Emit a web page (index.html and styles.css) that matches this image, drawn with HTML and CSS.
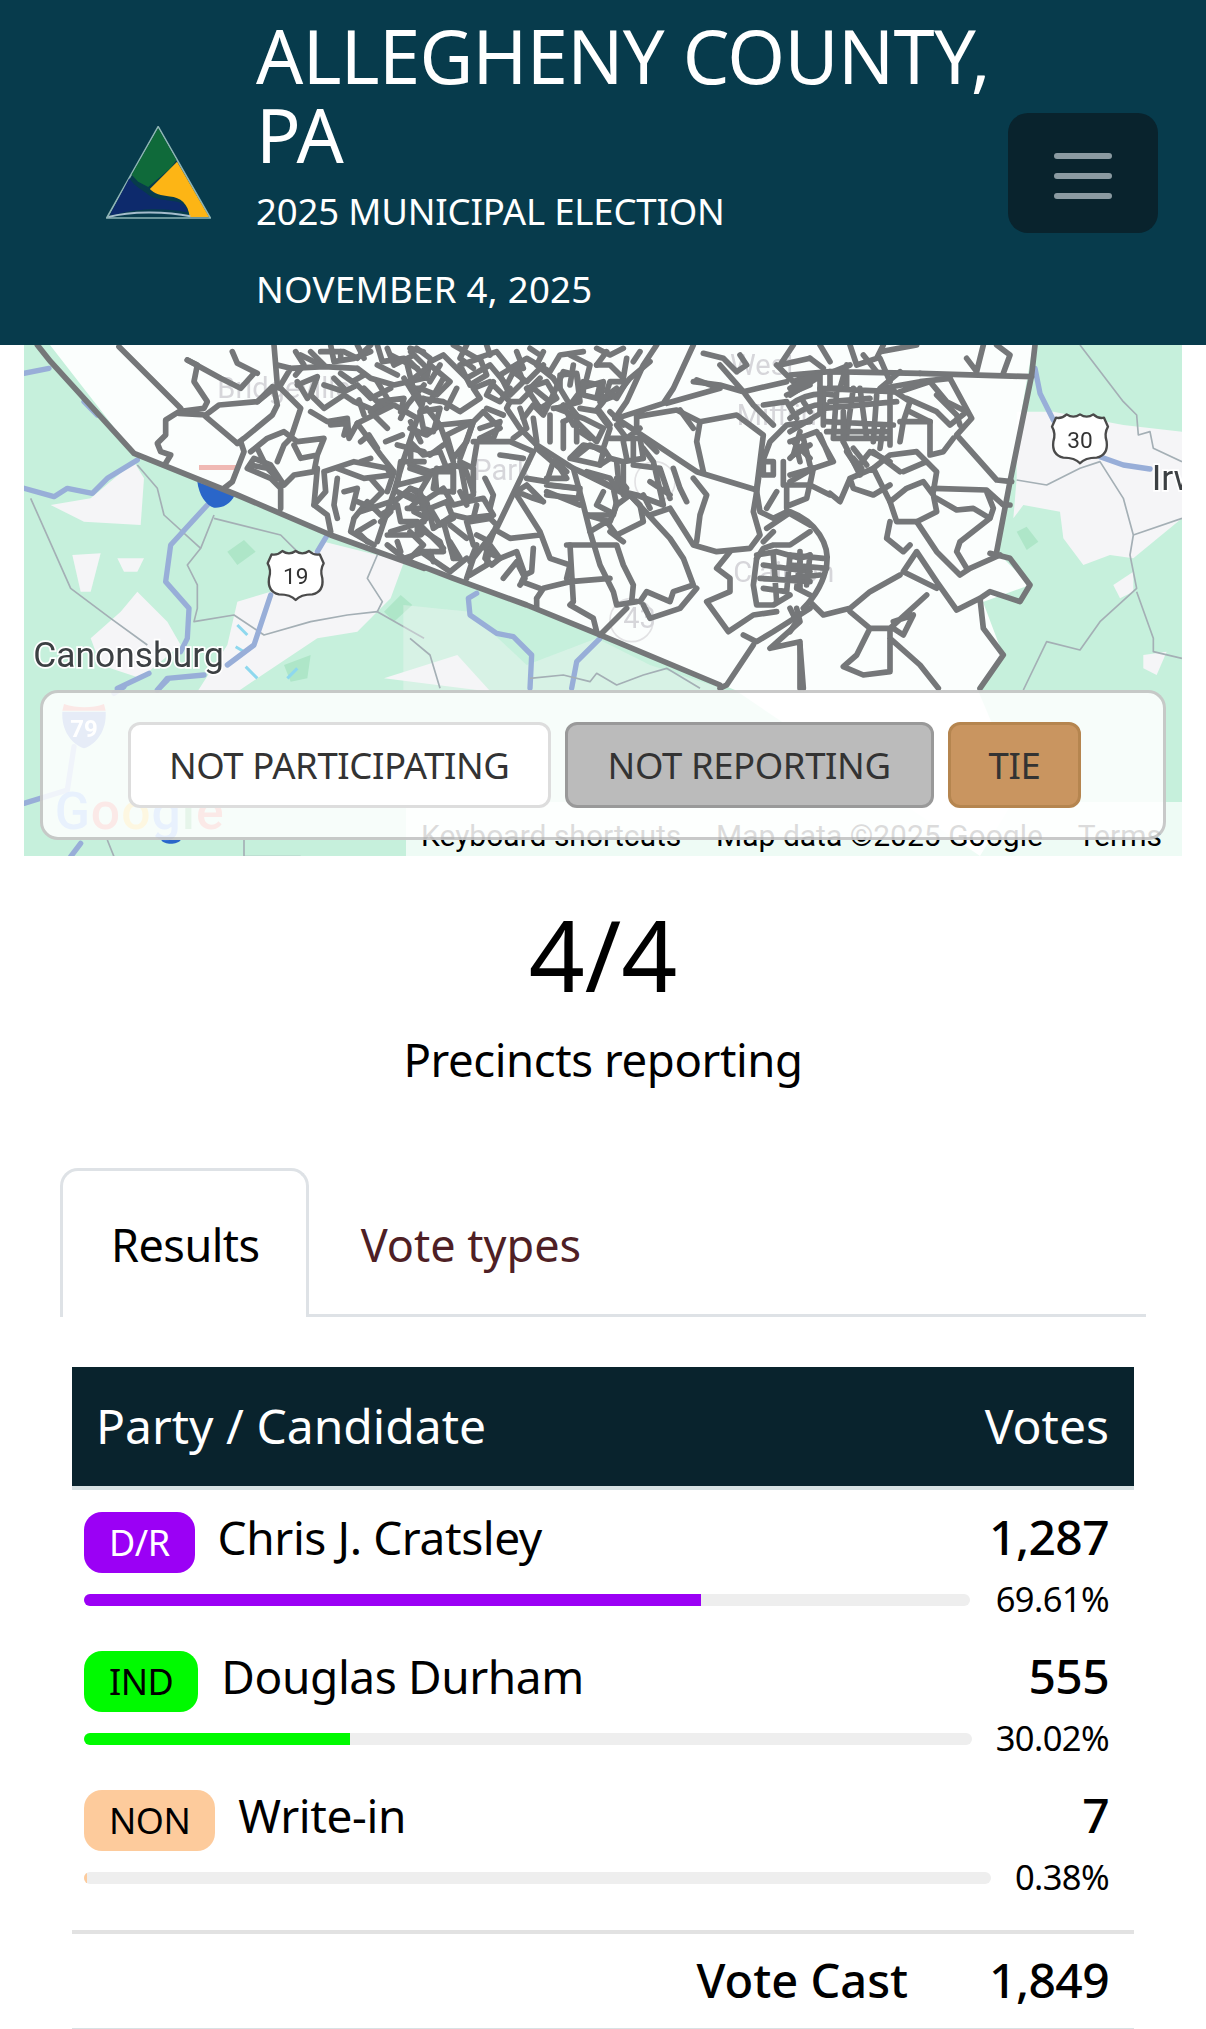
FILE: index.html
```html
<!DOCTYPE html>
<html lang="en">
<head>
<meta charset="utf-8">
<title>Allegheny County, PA - 2025 Municipal Election</title>
<link rel="stylesheet" href="styles.css">
</head>
<body>
<header class="site-header">
  <svg class="logo" viewBox="78 78 316 280" aria-hidden="true">
    <path class="logo-edge" d="M235 80L392 355H330L80 355Z"/>
    <path class="logo-green" d="M235 85L290 180L272 205L205 262L175 246L155 225Z"/>
    <path class="logo-yellow" d="M292 186L388 352H330C326 312 302 292 270 290C245 288 222 282 210 268Z"/>
    <path class="logo-navy" d="M148 235C165 262 190 270 205 285C235 305 290 300 308 312C320 320 324 332 322 338C260 325 170 325 108 345L90 345Z"/>
    <path class="logo-base" d="M85 352C150 334 260 334 332 350"/>
  </svg>
  <div class="titles">
    <h1 class="title">ALLEGHENY COUNTY, PA</h1>
    <p class="subtitle">2025 MUNICIPAL ELECTION</p>
    <p class="subtitle subtitle-date">NOVEMBER 4, 2025</p>
  </div>
  <button class="toggler" aria-label="Menu"><span></span><span></span><span></span></button>
</header>

<section class="map">
  <svg class="map-art" viewBox="24 345 1158 511" aria-hidden="true">
    <rect class="m-green" x="24" y="345" width="1158" height="511"/>
    <g transform="translate(24 345) scale(.33333)">
      <path class="m-land" d="M80 480L200 460L330 350L360 400L350 540L180 530Z"/>
      <path class="m-land" d="M145 630L230 625L200 740L170 740Z"/>
      <path class="m-land" d="M280 640L360 640L340 680L300 680Z"/>
      <path class="m-land" d="M290 800L340 740L430 830L470 900L350 1000L230 960L200 880Z"/>
      <path class="m-land" d="M640 770L740 740L900 590L1140 650L1100 760L1000 860L880 880L700 1000L640 1040L520 1040L610 900Z"/>
      <path class="m-land" d="M1080 1000L1300 930L1400 1040Z"/>
      <path class="m-dark" d="M610 620L660 585L695 620L640 660Z"/>
      <path class="m-dark" d="M1080 800L1130 750L1165 780L1110 830Z"/>
      <path class="m-dark" d="M780 960L860 930L850 1000L800 1010Z"/>
      <path class="m-road-thin" d="M20 460L140 730L260 820L370 900"/>
      <path class="m-road-thin" d="M570 510L530 610L490 660L520 720L520 790L510 830L630 810L720 870L860 830L970 810L1060 800L1200 880"/>
      <path class="m-road-thin" d="M570 520L770 570L820 620"/>
      <path class="m-road-thin" d="M340 360L400 430L420 510L530 610"/>
      <path class="m-road-thin" d="M1060 630L1030 700L1075 770L1060 800"/>
      <path class="m-water" d="M640 840L670 870M635 905L660 920M665 965L700 1000M790 1000L820 970"/>
      <path class="m-road" d="M0 85L75 70M0 430L90 455L130 430L205 445L250 400L340 345"/>
      <path class="m-road" d="M910 570L880 620M740 750L690 900L610 960"/>
      <path class="m-road" d="M550 480L440 600L425 710L495 790L490 880L470 920M540 990L430 1000L405 1030M375 985L280 1030"/>
      <path class="m-road" d="M180 170L220 210"/>
      <path class="m-interstate" d="M520 410L632 450C620 480 590 490 570 488C545 480 525 450 520 410Z"/>
    </g>
    <g transform="translate(410 345) scale(.33333)">
      <path class="m-land" d="M-20 780L180 800L350 960L560 880L720 960L950 1035L-20 1035Z" opacity=".35"/>
      <path class="m-road" d="M200 745L175 760L180 810L260 865L310 875L365 930L360 1030M570 880L500 950L485 1030"/>
      <path class="m-road-thin" d="M0 880L60 930L90 1030M360 1000L460 990L540 1010L560 985L620 1020L700 990L770 970L870 1030"/>
    </g>
    <g transform="translate(790 345) scale(.33333)">
      <path class="m-land" d="M680 200L790 200L1000 240L1176 260L1176 520L1030 640L960 630L880 660L820 580L810 500L700 480L670 520L680 400Z"/>
      <path class="m-land" d="M970 720L1030 680L1030 740L990 760Z"/>
      <path class="m-land" d="M1060 930L1130 920L1100 990L1060 970Z"/>
      <path class="m-dark" d="M680 560L710 545L745 590L710 615Z"/>
      <path class="m-road" d="M735 70L750 145L790 225M930 335L1000 360L1080 372"/>
      <path class="m-road-thin" d="M870 0L1000 170L1040 210L1045 270L1080 260L1090 310L1176 350M680 405L770 420L870 370L930 350L1000 460L1030 570L1020 630L1040 730L930 830L870 915L770 890L700 1035M1030 570L1176 520M1040 740L1090 880L1090 920L1176 940"/>
    </g>
    <path class="m-county" d="M50 345L134 453L331 535L600 635L735 690L980 856L1020 790L977 688L1003 655L983 602L1030 585L997 552L1033 345Z"/>
    <g transform="translate(24 345) scale(.33333)">
      <path class="m-interstate-top" d="M525 360L640 360L640 375L525 375Z"/>
      <text class="m-faint" x="580" y="160">Bridgeville</text>
    </g>
    <g transform="translate(410 345) scale(.33333)">
      <text class="m-faint" x="190" y="405">Park</text>
      <text class="m-faint" x="960" y="90">West</text>
      <text class="m-faint" x="980" y="240">Mifflin</text>
      <circle class="m-faint-line" cx="665" cy="825" r="65"/>
      <circle class="m-faint-line" cx="735" cy="410" r="60"/>
      <text class="m-faint" x="640" y="850">43</text>
      <text class="m-faint" x="970" y="710">Clairton</text>
    </g>
    <g class="prec" transform="translate(24 345) scale(.33333)">
      <path class="county-edge" d="M40 0L80 50L330 325L640 450L920 570L1200 670"/>
      <path d="M285 5L470 190M545 215L640 295"/>
      <path d="M490 45L520 60L510 110L550 170L540 190L465 200L425 225L425 270L400 295L410 320L440 330L425 355"/>
      <path d="M465 205L545 210L585 180L700 170L745 125L770 130"/>
      <path d="M700 170L750 130L760 180L745 210L660 280L640 295"/>
      <path d="M650 290L660 320L625 410L600 430"/>
      <path d="M490 45L590 100L650 130L690 85M625 20L640 55L700 85"/>
      <path d="M750 0L760 120L790 150L830 190L800 280L780 300L760 350"/>
      <path d="M760 60L800 70L900 65L1000 70M800 70L770 120M1000 70L1040 100L1110 120L1200 100"/>
      <path d="M820 120L880 95L860 150L900 190L960 150L990 170L1060 200L1100 170"/>
      <path d="M920 0L930 50L990 40L1040 20M1060 0L1075 50L1140 40M1100 30L1180 70"/>
      <path d="M680 320L730 280L780 260L820 290L900 280L880 330L830 340L810 300M880 330L870 380L810 390L780 420L740 360L690 340L670 370L740 400L770 430L770 490"/>
      <path d="M860 200L910 230L970 220L975 280L1000 235L1070 330L1110 380L1090 440"/>
      <path d="M900 380L990 350L1090 370L1100 390L1020 400L940 370M900 380L905 440L870 480L910 510L920 560M940 400L930 480L940 520"/>
      <path d="M1180 220L1140 340L1110 440L1060 590M1000 235L1110 180L1180 220"/>
      <path d="M1200 120L1150 180L1130 220M1200 350L1130 350L1120 420L1200 400M1110 470L1160 430L1200 460"/>
      <path d="M990 520L1030 470L1070 510L1120 480L1130 530L1180 530L1180 570M990 520L980 560L1050 600M1090 570L1190 570L1200 560M1090 600L1140 640L1200 620"/>
      <path d="M950 40L950 20M820 110L850 160"/>
      <path d="M900 120L960 140L1000 120L1040 160L1100 130M920 240L970 235L960 270M1020 130L1060 170L1140 160L1130 200M1140 100L1190 180M1040 200L1090 250"/>
      <path d="M880 370L870 480M1120 300L1200 320M1030 590L1000 560L1050 530M1120 590L1130 620M1100 560L1200 530M1010 500L1100 470M680 360L730 370L760 400M700 310L720 350M1160 20L1200 60M1000 0L1020 40"/>
      <path d="M950 85L985 110L1020 90M1060 60L1120 90M1150 60L1165 120M860 20L900 60M815 20L840 60L815 90"/>
      <path d="M960 440L1000 430L985 490M1040 400L1075 440L1045 470M1160 230L1190 290M1085 290L1135 270M1150 490L1200 490"/>
      <path d="M890 20L960 20L1000 40L1040 0M1090 10L1110 60L1170 30M1060 110L1090 160L1050 190M1160 130L1190 130M830 30L890 60M930 100L960 130M1005 165L1020 210"/>
      <path d="M1010 290L1035 270L1060 310M1040 340L1010 350M1160 300L1160 345M1000 470L1050 490M1070 530L1100 500M1120 440L1180 470M1170 500L1200 515"/>
    </g>
    <g class="prec" transform="translate(410 345) scale(.33333)">
      <path d="M0 650L130 700L350 780L570 870L930 1020"/>
      <path d="M620 220L860 380L1040 435"/>
      <path d="M850 0L790 130L760 175L620 220M740 0L700 60L650 170L615 220M770 175L930 130L860 105M680 215L800 195L870 230L860 290L880 380"/>
      <path d="M870 230L980 210L1060 270L1050 350L1040 430M810 195L850 250"/>
      <path d="M680 215L680 260M370 320L260 550L190 640L170 700M190 290L300 290L370 320"/>
      <path d="M265 560L300 580L390 570M320 450L390 560L420 640L480 660L470 700"/>
      <path d="M380 300L490 370L520 480L540 560L570 660L610 740L620 780L680 770"/>
      <path d="M470 600L620 600L640 660L670 720L665 770M620 570L700 530L690 480L660 450L620 480L600 530L530 510"/>
      <path d="M660 450L780 580L820 640L850 720L790 740L780 770L710 740L690 770"/>
      <path d="M780 490L850 600L920 620L1020 610L1050 570L1030 500L1040 440M850 400L890 450L870 510L860 590M780 490L720 510"/>
      <path d="M860 730L810 790L720 820L700 780M960 620L920 670L960 700L960 740L890 770L955 860L1030 810L1100 800"/>
      <path d="M1200 790L1090 860L1040 890L1000 870M1030 900L950 1020L930 1030M1160 790L1170 830L1080 910L1170 890L1170 1030"/>
      <path d="M570 870L650 790M480 710L600 700M480 600L490 770L480 780L550 820L560 860M380 760L400 730L480 710M380 760L380 790"/>
      <path d="M180 690L230 660L240 600L270 640L320 620L345 690L335 710L390 730M370 610L365 680L345 690"/>
      <path d="M40 625L120 680M120 680L170 640M100 530L130 640M30 540L100 610"/>
      <path d="M0 450L40 470L100 430L130 480L170 470L220 460L250 510M50 470L70 550L130 510L170 520L250 510M170 530L190 600"/>
      <path d="M0 360L60 380L130 360L165 370L190 440M80 370L70 430M130 360L130 440M190 360L200 300"/>
      <path d="M0 250L50 270L90 240L130 350M50 190L90 240L190 230L150 340M190 230L220 200L270 250L210 280"/>
      <path d="M0 110L30 160L100 170L150 200L210 160L190 130L240 110L300 170L290 190L330 250L380 300"/>
      <path d="M0 50L50 100L60 50L100 30L130 60L170 100L240 60L290 120L310 80L350 110L400 60"/>
      <path d="M100 100L60 170M130 0L200 40L260 20L300 70L350 40L420 80L450 30L520 20"/>
      <path d="M300 170L330 170L370 130L420 170L400 210L370 180L340 220M370 220L380 290M420 210L420 290M460 230L460 310M500 220L500 290"/>
      <path d="M420 170L460 80L500 90L510 170L440 190L520 220L580 250L560 290L500 230M510 130L580 110L570 170L620 150L660 100L720 50"/>
      <path d="M580 170L560 195L600 250L580 310L600 340L570 360L480 340L520 300L570 310"/>
      <path d="M600 280L690 280L700 340L640 350L600 340M640 290L650 340M670 290L670 350M620 350L625 400L650 430L640 450L620 400"/>
      <path d="M640 360L640 440L680 450L760 480L730 350L700 310M670 360L750 370L780 460M720 410L780 450M790 370L810 430L830 470"/>
      <path d="M490 370L560 400L630 440M510 380L610 430L620 480M410 420L500 430M410 440L510 480M400 470L370 460L320 440L350 420L400 470M350 400L410 410L430 350"/>
      <path d="M480 120L490 60M560 60L600 60L640 100L650 40M460 180L490 240M620 130L580 160"/>
      <path d="M1200 230L1130 240L1080 290L1050 370L1040 440L1050 500L1090 520L1130 500L1200 540"/>
      <path d="M1060 350L1090 350L1090 390L1060 390ZM1120 350L1120 420L1200 420M1150 290L1200 340M1130 430L1130 490M1070 490L1100 440"/>
      <path d="M880 25L940 40L980 80L1010 60L990 30M930 60L1000 140L1030 180L1090 240M850 110L930 120L1000 140L1130 110M1130 150L1200 120M1150 0L1110 60L1200 40"/>
      <path d="M1040 630L1100 620L1170 640L1200 630M1040 640L1030 720L1040 780L1090 780L1140 750M1060 660L1200 680M1050 700L1200 710M1060 730L1130 740M1090 630L1100 770M1140 630L1130 740M1170 650L1160 730L1200 750"/>
      <path d="M1040 640L1060 610L1090 600L1140 600L1200 560M1070 550L1130 510"/>
      <path d="M0 110L60 60L120 110L80 150L30 130M150 60L210 40L230 90L180 120L150 60M270 90L320 60L340 110L300 150L270 90M350 130L410 110L440 160L390 190L350 130M450 90L500 85L510 140L480 180L450 130Z"/>
      <path d="M520 110L570 120L560 160L520 150ZM600 110L650 110L620 160L590 140ZM430 190L480 185L500 210L460 230M510 190L570 200L600 240"/>
      <path d="M30 200L90 190L70 260L40 250ZM110 270L190 230L170 290L130 340ZM210 250L270 230L250 280L210 280M0 290L40 330L90 320L110 370M0 370L60 390L30 440L0 430M75 380L130 380L130 440L80 440ZM150 350L190 370L190 450L170 460L150 350"/>
      <path d="M0 490L30 460L50 520L20 540M60 490L110 470L130 520L90 540ZM180 530L240 520L260 540L240 590L200 570M30 550L90 590L100 620L40 620M120 590L150 640L130 640M200 600L180 650M230 620L270 640L245 660L225 640ZM280 700L320 650L345 700L330 720"/>
      <path d="M380 310L450 370L470 400L410 400M490 340L540 300L580 320L570 360M530 380L600 400L620 430M420 420L510 430L505 460L410 450M440 350L470 380M530 510L610 510L620 470M540 560L590 530L620 570"/>
      <path d="M170 0L150 40L190 70M250 110L230 150L270 170L300 130M90 60L60 110M20 10L60 40M320 20L340 70M400 20L380 60L430 100M480 30L540 60L530 100M590 20L560 60"/>
      <path d="M230 190L280 210M40 160L30 210M140 130L110 190M330 190L350 250L310 280M390 100L360 130M510 260L540 280M620 240L650 280L690 250"/>
      <path d="M1060 180L1130 170L1160 220M1100 60L1150 110L1200 90M1180 170L1200 200M1170 260L1150 330L1200 300"/>
      <path d="M100 300L60 330M200 480L190 520M30 440L40 480M120 540L170 580M250 560L225 610M60 620L70 650M150 440L170 480M0 560L40 600L0 640"/>
      <path d="M225 400L250 450L240 490M270 330L340 340M580 440L560 480L600 500M600 560L640 590M700 450L720 490M1090 560L1060 590"/>
      <path d="M560 10L600 30L640 10M670 50L690 20M360 10L390 30M230 0L240 30M40 20L0 10M450 130L430 100M700 280L740 320M600 200L640 240"/>
    </g>
    <g class="prec" transform="translate(790 345) scale(.33333)">
      <path d="M735 0L725 90L660 410L620 620M390 85L725 95M480 100L545 220L500 270L620 405L665 410"/>
      <path d="M430 430L590 435L640 480L660 480M440 460L500 495L550 490L600 520L610 490L590 440M380 530L440 620L510 690L540 670L630 630M600 520L510 590L500 620L530 670"/>
      <path d="M600 625L660 640L720 720L690 770L600 740L570 760L500 795L440 710L380 620L340 680L440 730M570 760L580 850L640 930L570 1030"/>
      <path d="M300 530L290 580L340 620L360 600M300 470L320 530L380 530L440 500L430 450L400 410L350 430L300 470"/>
      <path d="M120 445L150 470L180 400L250 370L300 470M180 400L190 430L250 450L300 420M70 370L60 420L120 450M0 410L70 370L50 460L0 480"/>
      <path d="M0 500C80 530 120 600 110 660C100 720 70 760 40 790"/>
      <path d="M60 770L100 810L180 790L240 740L330 690M180 800L240 850L300 850L410 750M240 850L200 930L160 965L220 990L300 980L300 850M300 880L390 960L445 1030M310 830L370 810L340 870L310 850M30 900L40 1030"/>
      <path d="M0 630L100 640M0 660L110 670M0 700L90 690M30 620L30 730M60 630L50 720M0 790L20 830L0 860"/>
      <path d="M0 180C40 150 80 140 130 150M0 220C40 190 70 175 110 180M0 260L100 200M0 290L80 260L130 350L70 370M40 280L60 360M90 270L120 340"/>
      <path d="M90 130L310 140M100 190L320 170M110 230L310 240M130 280L300 280M120 80L120 130L170 130L170 80L120 80M100 140L100 240M140 140L130 280M190 130L170 270M210 130L230 280M260 150L250 290M300 150L300 300"/>
      <path d="M120 80L390 85M270 20L380 0M0 90L120 80M530 40L560 80L580 0M640 85L660 30L620 0M90 0L120 50M180 0L200 60L260 40L280 0M180 60L130 80"/>
      <path d="M160 290L200 370L240 320L300 350M170 310L210 390M280 130L390 110L480 100M330 140L420 110L470 170L530 200L480 240L440 200L350 160M420 230L420 330L460 320L490 280"/>
      <path d="M330 230L420 230M340 380L410 350L440 380L430 440M250 370L300 330L380 320L420 360M300 130L360 170L340 230L330 290"/>
      <path d="M0 390L70 370M60 110L90 90L90 200M0 130L50 100L90 90M20 310L30 350M150 130L170 60M170 320L210 380M190 310L230 360M190 340L215 370M0 150L80 100M330 80L270 130L310 140"/>
      <path d="M270 40L300 110M220 30L260 80M60 40L100 70M360 200L420 230M440 150L500 210L510 240M120 170L240 160M110 260L290 260M160 200L160 290M280 240L270 310M0 340L40 300M250 320L330 380"/>
    </g>
    <g transform="translate(24 345) scale(.33333)">
      <path class="shield" transform="translate(815 690)" d="M-72-62Q-55-58-40-72Q-20-58 0-72Q20-58 40-72Q55-58 72-62L84-35Q72-15 80 10Q85 50 50 58Q15 58 0 75Q-15 58-50 58Q-85 50-80 10Q-72-15-84-35Z"/>
      <text class="shield-num" x="815" y="718">19</text>
      <text class="m-label" x="28" y="965">Canonsburg</text>
    </g>
    <g transform="translate(790 345) scale(.33333)">
      <path class="shield" transform="translate(870 280)" d="M-72-62Q-55-58-40-72Q-20-58 0-72Q20-58 40-72Q55-58 72-62L84-35Q72-15 80 10Q85 50 50 58Q15 58 0 75Q-15 58-50 58Q-85 50-80 10Q-72-15-84-35Z"/>
      <text class="shield-num" x="870" y="308">30</text>
      <text class="m-label" x="1085" y="435">Irwin</text>
    </g>
    <g transform="translate(24 680) scale(.33333)">
      <path class="i79-blue" d="M115 95L245 95C248 150 220 190 180 205C140 190 112 150 115 95Z"/>
      <path class="i79-red" d="M120 72C160 85 205 85 240 72L245 92L115 92Z"/>
      <text class="i79-num" x="180" y="172">79</text>
      <path class="m-road" d="M150 200L130 330L0 370M300 20L270 40M430 0L400 30M170 490L140 530"/>
      <path class="m-road-thin" d="M250 480L270 530M660 480L660 530L830 530"/>
      <path class="i79-blue2" d="M412 480C420 495 460 495 470 480Z"/>
      <text class="g-logo" x="92" y="448"><tspan class="g-b">G</tspan><tspan class="g-r">o</tspan><tspan class="g-y">o</tspan><tspan class="g-b">g</tspan><tspan class="g-g">l</tspan><tspan class="g-r">e</tspan></text>
    </g>
  </svg>
  <div class="map-attrib">
    <span>Keyboard shortcuts</span><span>Map data ©2025 Google</span><span>Terms</span>
  </div>
  <div class="legend">
    <span class="legend-btn lb-np">NOT PARTICIPATING</span>
    <span class="legend-btn lb-nr">NOT REPORTING</span>
    <span class="legend-btn lb-tie">TIE</span>
  </div>
</section>

<section class="reporting">
  <div class="reporting-num">4/4</div>
  <div class="reporting-label">Precincts reporting</div>
</section>

<nav class="tabs">
  <a class="tab tab-active">Results</a>
  <a class="tab tab-link">Vote types</a>
</nav>

<section class="results">
  <div class="results-head"><span>Party / Candidate</span><span>Votes</span></div>
  <div class="cand">
    <div class="cand-main">
      <div class="cand-name"><span class="badge b-dr">D/R</span><span>Chris J. Cratsley</span></div>
      <div class="bar"><div class="bar-fill fill-dr" style="width:69.61%"></div></div>
    </div>
    <div class="cand-nums"><div class="votes">1,287</div><div class="pct">69.61%</div></div>
  </div>
  <div class="cand">
    <div class="cand-main">
      <div class="cand-name"><span class="badge b-ind">IND</span><span>Douglas Durham</span></div>
      <div class="bar"><div class="bar-fill fill-ind" style="width:30.02%"></div></div>
    </div>
    <div class="cand-nums"><div class="votes">555</div><div class="pct">30.02%</div></div>
  </div>
  <div class="cand">
    <div class="cand-main">
      <div class="cand-name"><span class="badge b-non">NON</span><span>Write-in</span></div>
      <div class="bar"><div class="bar-fill fill-non" style="width:.38%"></div></div>
    </div>
    <div class="cand-nums"><div class="votes">7</div><div class="pct">0.38%</div></div>
  </div>
  <div class="total"><span class="total-label">Vote Cast</span><span class="votes">1,849</span></div>
</section>
</body>
</html>
```
FILE: styles.css
```css
* { box-sizing: border-box; }
html, body { margin: 0; padding: 0; }
body {
  width: 1206px;
  height: 2029px;
  overflow: hidden;
  background: #fff;
  color: #000;
  font-family: "Noto Sans", "Open Sans", sans-serif;
}

/* Header */
.site-header {
  height: 345px;
  background: #073b4c;
  display: flex;
  align-items: center;
  padding-left: 106px;
  color: #fff;
}
.logo { width: 105px; height: 93px; flex: none; margin-right: 45px; }
.logo-edge { fill: none; stroke: #8fb5b5; stroke-width: 5; stroke-linejoin: round; }
.logo-green { fill: #0f6a3a; }
.logo-yellow { fill: #fdb515; }
.logo-navy { fill: #0d2a6c; }
.logo-base { fill: none; stroke: #a5bccb; stroke-width: 6; }
.titles { width: 740px; flex: none; align-self: flex-start; padding-top: 16px; }
.title {
  margin: 0 0 12px;
  font-size: 74px;
  line-height: 79px;
  font-weight: 400;
  letter-spacing: -.65px;
}
.subtitle {
  margin: 0 0 28px;
  font-size: 36.6px;
  line-height: 50px;
  letter-spacing: -.2px;
}
.subtitle-date { letter-spacing: .3px; }
.subtitle:last-child { margin-bottom: 0; }
.toggler {
  margin-left: auto;
  margin-right: 48px;
  width: 150px;
  height: 120px;
  flex: none;
  background: #09232d;
  border: 0;
  border-radius: 20px;
  display: flex;
  flex-direction: column;
  align-items: center;
  justify-content: center;
  gap: 14px;
  padding: 6px 0 0;
}
.toggler span { display: block; width: 58px; height: 6px; border-radius: 3px; background: #8b9aa1; }

/* Map */
.map { position: relative; height: 511px; margin: 0 24px; overflow: hidden; }
.map-art { display: block; width: 1158px; height: 511px; filter: blur(.5px); }
.m-green { fill: #c6f0dc; }
.m-land { fill: #f5f5f7; }
.m-dark { fill: #aee6c8; }
.m-road { fill: none; stroke: #98aed8; stroke-width: 16; stroke-linecap: round; stroke-linejoin: round; }
.m-road-thin { fill: none; stroke: #a4afb5; stroke-width: 5; stroke-linejoin: round; }
.m-water { fill: none; stroke: #8ed8ee; stroke-width: 9; }
.m-interstate { fill: #2a66c9; }
.m-interstate-top { fill: #f0b9b4; }
.m-county { fill: rgba(255, 255, 255, .92); }
.m-faint { font: 400 87px Roboto, sans-serif; fill: #d6d6da; }
.m-faint-line { fill: none; stroke: #e2e2e4; stroke-width: 5; }
.prec path { fill: none; stroke: #757779; stroke-width: 17; stroke-linejoin: round; stroke-linecap: round; }
.shield { fill: #fff; stroke: #4a4a4a; stroke-width: 7; stroke-linejoin: round; }
.shield-num { font: 400 68px Roboto, sans-serif; fill: #333; text-anchor: middle; }
.m-label { font: 400 106px Roboto, sans-serif; fill: #3c4043; stroke: #fff; stroke-width: 10; paint-order: stroke; }
.i79-blue { fill: #4d78c4; }
.i79-blue2 { fill: #2a66c9; }
.i79-red { fill: #e25a50; }
.i79-num { font: 700 72px Roboto, sans-serif; fill: #fff; text-anchor: middle; }
.g-logo { font: 500 155px Roboto, sans-serif; opacity: .8; letter-spacing: 3px; }
.g-b { fill: #4285f4; }
.g-r { fill: #ea4335; }
.g-y { fill: #fbbc05; }
.g-g { fill: #34a853; }
.map-attrib {
  position: absolute;
  left: 382px;
  right: 0;
  bottom: 0;
  height: 54px;
  padding: 0 20px 0 15px;
  display: flex;
  justify-content: space-between;
  align-items: flex-end;
  background: rgba(255, 255, 255, .7);
  font: 400 30px/40px Roboto, sans-serif;
  color: #000;
}
.legend {
  position: absolute;
  left: 16px;
  top: 345px;
  width: 1126px;
  height: 150px;
  display: flex;
  align-items: center;
  gap: 14px;
  padding-left: 85px;
  background: rgba(255, 255, 255, .86);
  border: 3px solid rgba(165, 165, 165, .6);
  border-radius: 18px;
}
.legend-btn {
  height: 86px;
  display: flex;
  align-items: center;
  padding: 0 38px;
  font-size: 36.5px;
  letter-spacing: -.4px;
  color: #333;
  border: 3px solid;
  border-radius: 12px;
}
.lb-np { background: #fff; border-color: #ddd; }
.lb-nr { background: #bbb; border-color: #999; padding: 0 40px; }
.lb-tie { background: #c99560; border-color: #b5854f; }

/* Reporting */
.reporting { text-align: center; padding-top: 30px; height: 312px; }
.reporting-num { font-size: 98px; line-height: 136px; }
.reporting-label { font-size: 45.5px; line-height: 62px; letter-spacing: -.4px; margin-top: 6px; }

/* Tabs */
.tabs {
  margin: 0 60px;
  height: 149px;
  display: flex;
  border-bottom: 3px solid #dee2e6;
}
.tab {
  height: 149px;
  padding: 0 46px 0 48px;
  display: flex;
  align-items: center;
  font-size: 45px;
  letter-spacing: -.5px;
  color: #4f1f25;
  border: 3px solid transparent;
  border-bottom: 0;
  border-radius: 18px 18px 0 0;
}
.tab-link { letter-spacing: 0; padding-left: 49px; }
.tab-active { color: #000; background: #fff; border-color: #dee2e6; }

/* Results */
.results { margin: 50px 72px 0; }
.results-head {
  height: 123px;
  display: flex;
  justify-content: space-between;
  align-items: center;
  padding: 0 25px 2px 24px;
  background: #09232d;
  border-bottom: 4px solid #d8e2e4;
  color: #fff;
  font-size: 48px;
}
.cand {
  display: flex;
  height: 139px;
  padding: 22px 25px 0 12px;
  gap: 19px;
}
.cand-main { flex: 1; min-width: 0; }
.cand-name { display: flex; align-items: flex-start; gap: 23px; height: 82px; font-size: 46px; line-height: 50px; letter-spacing: -.4px; }
.badge {
  height: 61px;
  padding: 0 25px;
  display: flex;
  align-items: center;
  border-radius: 18px;
  font-size: 36px;
  letter-spacing: -.5px;
}
.b-dr { background: #9b00f5; color: #fff; }
.b-ind { background: #00fa00; color: #000; }
.b-non { background: #fdcb9c; color: #000; }
.bar { height: 12px; border-radius: 6px; background: #eee; overflow: hidden; }
.bar-fill { height: 100%; }
.fill-dr { background: #9b00f5; }
.fill-ind { background: #00fa00; }
.fill-non { background: #fdcb9c; }
.cand-nums { text-align: right; }
.votes { font-size: 48px; line-height: 50px; letter-spacing: -.6px; font-weight: 500; }
.pct { font-size: 34.5px; line-height: 48px; margin-top: 13px; padding-left: 5px; letter-spacing: -.6px; font-kerning: none; }
.total {
  margin-top: 23px;
  height: 102px;
  display: flex;
  justify-content: flex-end;
  align-items: center;
  gap: 81px;
  padding: 0 25px 2px;
  border-top: 4px solid #e2e2e2;
  border-bottom: 4px solid #d8e2e4;
}
.total-label { font-size: 47px; font-weight: 500; }
```
